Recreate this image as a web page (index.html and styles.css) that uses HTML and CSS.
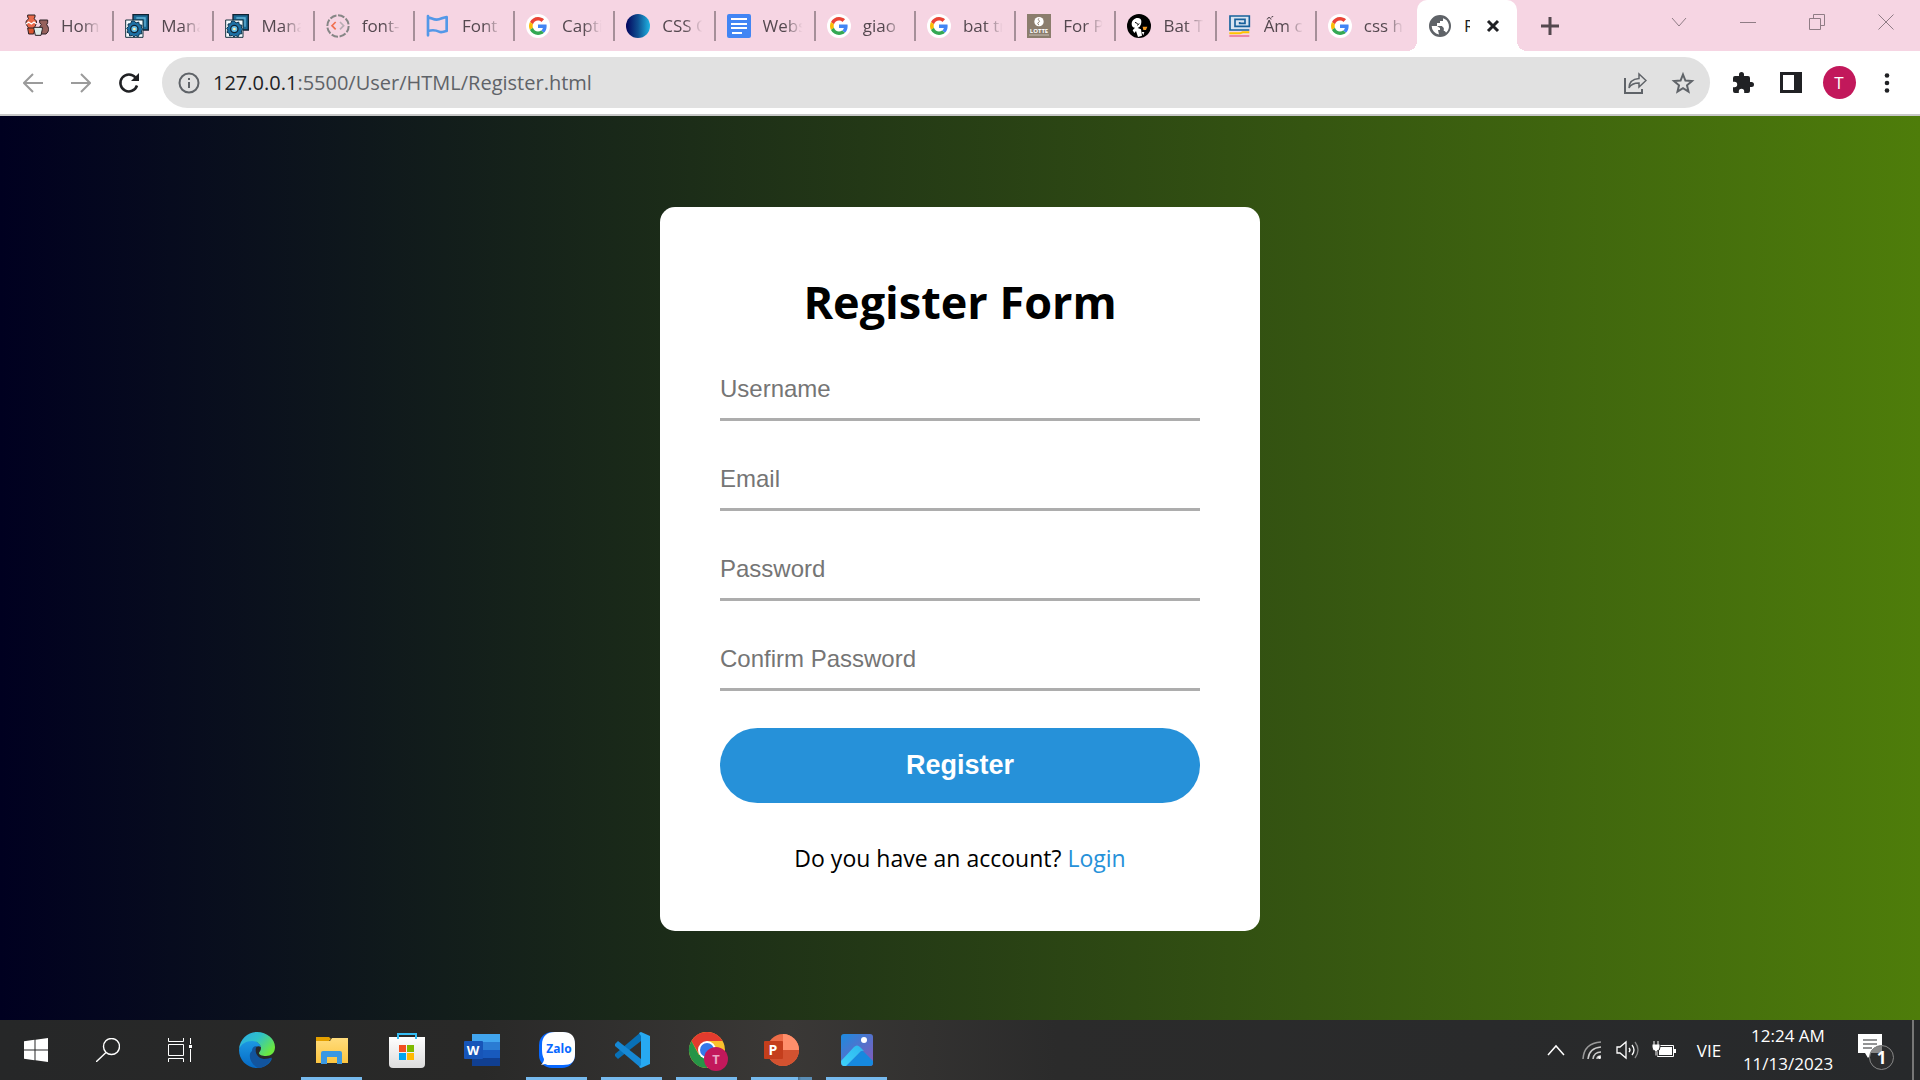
FILE: index.html
```html
<!DOCTYPE html>
<html lang="en">
<head>
<meta charset="utf-8">
<title>Register</title>
<link rel="stylesheet" href="styles.css">
</head>
<body>
<svg class="defs" aria-hidden="true">
  <defs>
    <linearGradient id="g-css"><stop offset="0" stop-color="#03045e"/><stop offset=".5" stop-color="#0f4f90"/><stop offset="1" stop-color="#1fb4e4"/></linearGradient>
    <linearGradient id="g-edge1" x1="0" y1="0" x2="1" y2=".6"><stop offset="0" stop-color="#2aa9ea"/><stop offset=".5" stop-color="#2fc2c9"/><stop offset="1" stop-color="#6be83f"/></linearGradient>
    <linearGradient id="g-edge2" x1="0" y1="0" x2="0" y2="1"><stop offset="0" stop-color="#1d9ae4"/><stop offset="1" stop-color="#0669c4"/></linearGradient>
    <linearGradient id="g-folder" x1="0" y1="0" x2="0" y2="1"><stop offset="0" stop-color="#ffdc7c"/><stop offset="1" stop-color="#fcc540"/></linearGradient>
    <linearGradient id="g-photo" x1="0" y1="0" x2="1" y2="1"><stop offset="0" stop-color="#1b8be0"/><stop offset="1" stop-color="#8a58b8"/></linearGradient>
    <linearGradient id="g-hill" x1="0" y1="1" x2="1" y2="0"><stop offset="0" stop-color="#3ed2fa"/><stop offset="1" stop-color="#2cb6ee"/></linearGradient>
    <linearGradient id="g-store" x1="0" y1="0" x2="0" y2="1"><stop offset="0" stop-color="#fff"/><stop offset="1" stop-color="#dcdcdc"/></linearGradient>
  </defs>
  <symbol id="google" viewBox="0 0 72 72">
    <circle cx="36" cy="36" r="36" fill="#fff"/>
    <g transform="translate(9 9) scale(1.125)">
      <path fill="#ea4335" d="M24 9.500c3.540 0 6.710 1.220 9.210 3.600l6.850-6.850C35.900 2.380 30.470 0 24 0 14.620 0 6.510 5.380 2.560 13.220l7.980 6.190C12.430 13.720 17.740 9.500 24 9.500z"/>
      <path fill="#4285f4" d="M46.980 24.550c0-1.570-.15-3.090-.38-4.550H24v9.020h12.940c-.58 2.960-2.260 5.480-4.780 7.180l7.730 6c4.510-4.180 7.090-10.360 7.090-17.650z"/>
      <path fill="#fbbc05" d="M10.530 28.590c-.48-1.450-.76-2.990-.76-4.590s.27-3.140.76-4.590l-7.980-6.190C.92 16.460 0 20.120 0 24c0 3.880.92 7.540 2.560 10.780z"/>
      <path fill="#34a853" d="M24 48c6.480 0 11.930-2.130 15.890-5.810l-7.730-6c-2.150 1.450-4.920 2.300-8.160 2.300-6.260 0-11.570-4.220-13.470-9.910l-7.980 6.190C6.510 42.620 14.620 48 24 48z"/>
    </g>
  </symbol>
  <symbol id="gear" viewBox="0 0 72 72">
    <path d="M24 2h46v46H24z" fill="#1b6a96" stroke="#123" stroke-width="4"/>
    <path d="M34 12h26v26" fill="none" stroke="#67b5d8" stroke-width="4"/>
    <path d="M2 18h52v52H2z" fill="#f4fbff" stroke="#17323f" stroke-width="3"/>
    <path d="M28 21l5 6 8-3 2 8 8 2-2 8 5 4-5 5 2 8-8 1-3 8-8-3-5 4-5-5-8 2-1-8-7-3 3-7-4-5 5-5-1-8 8-1 3-8z" fill="#1d70a4" stroke="#10354f" stroke-width="3"/>
    <circle cx="28" cy="45" r="11" fill="#65bfe8" stroke="#123" stroke-width="4"/><circle cx="28" cy="45" r="4" fill="#fff2b0"/>
  </symbol>
</svg>

<header class="browser">
  <div class="strip">
    <nav class="tabs" aria-label="Open tabs">
      <a class="tab" href="#"><svg class="fav" viewBox="0 0 72 72"><path d="M8 3h22v6l-3 5c6 4 9 8 7 14-2 8-6 12-8 16h-14C10 40 4 34 3 28c-1-6 3-10 8-14l-3-5z" fill="#e8694a" stroke="#2b2024" stroke-width="3"/><path d="M3 30l8-6 8 6 8-6 8 6" fill="none" stroke="#fff" stroke-width="4"/><path d="M8 42h22l-4 18H11z" fill="#d9552f" stroke="#2b2024" stroke-width="3"/><path d="M44 18h24v8l-3 6c8 10 8 20-2 28H48c-8-8-8-18 1-28l-5-6z" fill="#96615c" stroke="#2b2024" stroke-width="3"/><path d="M26 40h26v6l-4 18H31l-4-18z" fill="#dcebe8" stroke="#2b2024" stroke-width="3"/></svg><span class="title">Home</span></a>
      <a class="tab" href="#"><svg class="fav"><use href="#gear"/></svg><span class="title">Mana</span></a>
      <a class="tab" href="#"><svg class="fav"><use href="#gear"/></svg><span class="title">Mana</span></a>
      <a class="tab" href="#"><svg class="fav" viewBox="0 0 72 72" fill="none"><circle cx="36" cy="36" r="32" stroke="#868686" stroke-width="6" stroke-dasharray="20 5"/><path d="M29 24L18 35l11 11" stroke="#f07050" stroke-width="5"/><path d="M42 24l11 11-11 11" stroke="#b9adb4" stroke-width="5"/></svg><span class="title">font-</span></a>
      <a class="tab" href="#"><svg class="fav" viewBox="0 0 72 72" fill="none" stroke="#5398e8" stroke-width="8" stroke-linejoin="round" stroke-linecap="round"><path d="M6 6v58M6 11c10 0 14 6 26 6s18-7 30-8v42c-10 1-15 6-23 2s-22-5-33-2"/></svg><span class="title">Font</span></a>
      <a class="tab" href="#"><svg class="fav"><use href="#google"/></svg><span class="title">Capti</span></a>
      <a class="tab" href="#"><svg class="fav" viewBox="0 0 24 24"><circle cx="12" cy="12" r="12" fill="url(#g-css)"/></svg><span class="title">CSS C</span></a>
      <a class="tab" href="#"><svg class="fav" viewBox="0 0 24 24"><rect width="24" height="24" rx="2" fill="#4285f4"/><path d="M4 5h16M4 10h16M4 14h16M5 19h10" stroke="#fff" stroke-width="2"/></svg><span class="title">Webs</span></a>
      <a class="tab" href="#"><svg class="fav"><use href="#google"/></svg><span class="title">giao</span></a>
      <a class="tab" href="#"><svg class="fav"><use href="#google"/></svg><span class="title">bat tr</span></a>
      <a class="tab" href="#"><svg class="fav" viewBox="0 0 72 72"><path d="M0 0h72v72H0z" fill="#8b7d6d"/><circle cx="36" cy="23" r="14" fill="#fff"/><path d="M36 13c-7 5 6 8 0 11-5 3-5 6 0 9" stroke="#8b7d6d" stroke-width="3" fill="none"/><text x="36" y="57" text-anchor="middle" class="glyph" font-size="18">LOTTE</text><path d="M6 63h60" stroke="#c9c1b6" stroke-width="3"/></svg><span class="title">For P</span></a>
      <a class="tab" href="#"><svg class="fav" viewBox="0 0 72 72"><circle cx="36" cy="36" r="36" fill="#000"/><path d="M14 30c0-12 12-20 22-17 8 2 8 10 6 18l-4 7-6 4 10 4 3 19-12 4-6-18-5 6-5-8 7-8c-6 0-10-4-10-11z" fill="#fff"/><path d="M24 25l8 4M30 34l7-5" stroke="#000" stroke-width="3"/><path d="M47 38h14l-4 10h-8z" fill="#f39a23"/><path d="M44 54l8 0-3 10z" fill="#fff"/></svg><span class="title">Bat Tr</span></a>
      <a class="tab" href="#"><svg class="fav" viewBox="0 0 72 72" fill="none"><path d="M4 6h60v42H4z" fill="#d8e4f0"/><path d="M64 48H6V6h58v31H21V16h30v12H35v-4" stroke="#17619b" stroke-width="5"/><path d="M4 58h32l8-3h20" stroke="#ffc400" stroke-width="6"/><path d="M4 66h60" stroke="#ee86a8" stroke-width="6"/></svg><span class="title">Ấm c</span></a>
      <a class="tab" href="#"><svg class="fav"><use href="#google"/></svg><span class="title">css h</span></a>
      <div class="tab active"><svg class="fav" viewBox="0 0 24 24"><path fill="#5f6368" d="M12 1a11 11 0 1 0 0 22 11 11 0 0 0 0-22zm-1 19.500A8.500 8.500 0 0 1 3.700 12h5.300l3 2v2h-2zm7-1.800c-.4-1.200-1-1.700-2.200-1.700v-3l-2-2H9V9h3V7h3V4.200a8.500 8.500 0 0 1 3 14.500z"/></svg><span class="title">R</span><button class="close" aria-label="Close tab"><svg viewBox="0 0 14 14" width="14" height="14"><path d="M2 2l10 10M12 2L2 12" stroke="#202124" stroke-width="3"/></svg></button></div>
    </nav>
    <div class="strip-end">
      <button class="newtab" aria-label="New tab"><svg viewBox="0 0 18 18" width="18" height="18"><path d="M9 0v18M0 9h18" stroke="#54484f" stroke-width="3"/></svg></button>
      <div class="window-buttons">
        <button aria-label="Search tabs"><svg viewBox="0 0 16 16"><path d="M1 4l7 8 7-8"/></svg></button>
        <button aria-label="Minimize"><svg viewBox="0 0 16 16"><path d="M0 8.500h16"/></svg></button>
        <button aria-label="Restore"><svg viewBox="0 0 16 16"><path d="M.5 4.500h11v11H.5zM4.500 4V.5h11v11H12"/></svg></button>
        <button aria-label="Close"><svg viewBox="0 0 16 16"><path d="M.5.5l15 15M15.500.5l-15 15"/></svg></button>
      </div>
    </div>
  </div>
  <div class="toolbar">
    <button class="tool" aria-label="Back"><svg viewBox="0 0 20 20" width="20" height="20"><path d="M20 10H2M10 1l-9 9 9 9" fill="none" stroke="#9b9b9b" stroke-width="2"/></svg></button>
    <button class="tool" aria-label="Forward"><svg viewBox="0 0 20 20" width="20" height="20"><path d="M0 10h18M10 1l9 9-9 9" fill="none" stroke="#9b9b9b" stroke-width="2"/></svg></button>
    <button class="tool" aria-label="Reload"><svg viewBox="0 0 22 22" width="22" height="22"><path d="M19 13.500A8.500 8.500 0 1 1 17.500 5.500" fill="none" stroke="#202124" stroke-width="2.500"/><path d="M21 1v8h-8z" fill="#202124"/></svg></button>
    <div class="omnibox">
      <svg viewBox="0 0 22 22" width="22" height="22"><circle cx="11" cy="11" r="9.500" fill="none" stroke="#5f6368" stroke-width="2"/><path d="M11 10v6M11 6v2" stroke="#5f6368" stroke-width="2"/></svg>
      <div class="url"><span class="host">127.0.0.1</span>:5500/User/HTML/Register.html</div>
      <button class="tool" aria-label="Share"><svg viewBox="0 0 24 24" width="24" height="24" fill="none" stroke="#5f6368" stroke-width="2"><path d="M2 7v15h17v-4"/><path d="M6 17c0-7 4-9 10-9.500V3l7 6.500-7 6.500v-4c-5 0-8 1-10 5z" stroke-width="1.500"/></svg></button>
      <button class="tool" aria-label="Bookmark"><svg viewBox="0 0 24 24" width="24" height="24"><path d="M12 3.500l2.400 6 6.600.5-5 4.300 1.500 6.200-5.500-3.400-5.500 3.400L8 14.300 3 10l6.600-.5z" fill="none" stroke="#5f6368" stroke-width="2"/></svg></button>
    </div>
    <button class="tool" aria-label="Extensions"><svg viewBox="0 0 24 24" width="24" height="24"><path fill="#202124" d="M20.500 11H19V7a2 2 0 0 0-2-2h-4V3.500a2.500 2.500 0 0 0-5 0V5H4a2 2 0 0 0-2 2v3.800h1.500a2.700 2.700 0 0 1 0 5.400H2V20a2 2 0 0 0 2 2h3.800v-1.500a2.700 2.700 0 0 1 5.400 0V22H17a2 2 0 0 0 2-2v-4h1.500a2.500 2.500 0 0 0 0-5z"/></svg></button>
    <button class="tool" aria-label="Side panel"><svg viewBox="0 0 22 22" width="22" height="22"><path d="M0 0h22v21H0z" fill="#202124"/><path d="M3 3h11v15H3z" fill="#fff"/></svg></button>
    <button class="tool" aria-label="Profile"><span class="avatar">T</span></button>
    <button class="tool" aria-label="Menu"><svg viewBox="0 0 6 20" width="6" height="20" fill="#202124"><circle cx="3" cy="2.500" r="2.300"/><circle cx="3" cy="10" r="2.300"/><circle cx="3" cy="17.500" r="2.300"/></svg></button>
  </div>
</header>

<main class="page">
  <form class="card">
    <h1>Register Form</h1>
    <div class="fields">
      <input type="text" placeholder="Username" aria-label="Username">
      <input type="email" placeholder="Email" aria-label="Email">
      <input type="password" placeholder="Password" aria-label="Password">
      <input type="password" placeholder="Confirm Password" aria-label="Confirm Password">
    </div>
    <button class="submit" type="button">Register</button>
    <p>Do you have an account? <a href="#">Login</a></p>
  </form>
</main>

<footer class="taskbar">
  <div class="system">
    <button aria-label="Start"><svg viewBox="0 0 24 24" width="24" height="24" fill="#fff"><path d="M0 3.300l10.500-1.500v9.700H0zM11.500 1.700L24 0v11.500H11.500zM0 12.500h10.500v9.700L0 20.700zM11.500 12.500H24V24l-12.500-1.700z"/></svg></button>
    <button aria-label="Search"><svg viewBox="0 0 24 24" width="24" height="24" fill="none" stroke="#fff" stroke-width="1.400"><circle cx="15.500" cy="8.500" r="8"/><path d="M10 14.500L0 24"/></svg></button>
    <button aria-label="Task view"><svg viewBox="0 0 24 24" width="24" height="24" fill="none" stroke="#fff"><path d="M.5 0v3.500h15V0M.5 6.500h15v11H.5zM.5 24v-3.500h15V24M22.500 0v6M22.500 11v13"/><path d="M21 7h3v3h-3z" fill="#fff" stroke="none"/></svg></button>
  </div>
  <div class="apps">
    <button aria-label="Edge"><svg viewBox="0 0 36 36" width="36" height="36"><path d="M0 18C1 9 8 7 13 8c6 1 9 5 9 7-4-2-8 1-8 6 0 6 6 10 12 9 3 0 5-2 7-3-3 6-9 9-15 9C8 36 0 28 0 18z" fill="url(#g-edge2)"/><path d="M13 19c0-3 2-5 5-5-3 4-1 12 7 13 4 0 7-2 8-1-3 6-8 10-14 10-6-3-9-9-8-14 0-1 1-2 2-3z" fill="#12549d"/><path d="M0 17C1 7 9 0 18 0c10 0 18 7 18 15 0 6-4 9-9 9-4 0-7-1-7-3 0-1 2-2 2-5 0-4-4-7-9-7C7 9 2 12 0 17z" fill="url(#g-edge1)"/></svg></button>
    <button class="open" aria-label="File Explorer"><svg viewBox="0 0 32 36" width="32" height="36"><path d="M0 9h14l2-3h16v25H0z" fill="url(#g-folder)"/><path d="M0 5h13l2 2-2 2H0z" fill="#e4a000"/><path d="M5 32V21q0-2 2-2h17q2 0 2 2v11h-5v-7H11v7z" fill="#3a98e2"/></svg></button>
    <button aria-label="Store"><svg viewBox="0 0 36 36" width="36" height="36"><path d="M0 5h36v27q0 4-4 4H4q-4 0-4-4z" fill="url(#g-store)"/><path d="M9 7V2h18v5" fill="none" stroke="#35bdf4" stroke-width="2"/><path d="M10 13h7v7h-7z" fill="#f25022"/><path d="M18 13h7v7h-7z" fill="#7fba00"/><path d="M10 21h7v7h-7z" fill="#00a4ef"/><path d="M18 21h7v7h-7z" fill="#ffb900"/></svg></button>
    <button aria-label="Word"><svg viewBox="0 0 36 36" width="36" height="36"><path d="M8 2h28v8H8z" fill="#41a5ee"/><path d="M8 10h28v8H8z" fill="#2b7cd3"/><path d="M8 18h28v8H8z" fill="#185abd"/><path d="M8 26h28v8H8z" fill="#103f91"/><rect y="9" width="19" height="18" rx="1" fill="#1755b8"/><text x="9" y="23" text-anchor="middle" class="glyph" font-size="13">W</text></svg></button>
    <button class="open" aria-label="Zalo"><svg viewBox="0 0 36 36" width="36" height="36"><rect width="36" height="36" rx="13" fill="#0868ff"/><path d="M16 0h8c8 0 12 4 12 12v10c0 8-4 11-12 11H12c-3 0-4 0-6-1l-4 1c2-2 3-4 3-6-2-4-2-7-2-14C3 4 8 0 16 0z" fill="#fff"/><text x="20" y="21" text-anchor="middle" class="glyph zalo" font-size="12">Zalo</text></svg></button>
    <button class="open" aria-label="Visual Studio Code"><svg viewBox="0 0 36 36" width="36" height="36"><path d="M1 24l3 3L27 9V0L1 22z" fill="#0870b6"/><path d="M1 12l3-3 23 18v9L1 14z" fill="#1688d4"/><path d="M25 1l2-1 9 4v28l-9 4-2-1 2-2V4z" fill="#27a9f1"/></svg></button>
    <button class="open" aria-label="Chrome"><svg viewBox="0 0 36 40" width="36" height="40" overflow="visible"><circle cx="18" cy="20" r="18" fill="#fbc02d"/><path d="M2.400 11A18 18 0 0 1 33.600 11H18L10 24z" fill="#e33b2e"/><path d="M2.400 11A18 18 0 0 0 18 38l8-13-16 0z" fill="#269447"/><circle cx="18" cy="20" r="9" fill="#fff"/><circle cx="18" cy="20" r="7" fill="#3478ea"/><circle cx="27" cy="29" r="12" fill="#c2185b"/><text x="27" y="34" text-anchor="middle" class="glyph profile" font-size="13">T</text></svg></button>
    <button class="open grouped" aria-label="PowerPoint"><svg viewBox="0 0 36 36" width="36" height="36"><circle cx="19" cy="18" r="16" fill="#ed6c47"/><path d="M19 2a16 16 0 0 1 16 16H19z" fill="#ff8f6b"/><path d="M3 18h32a16 16 0 0 1-32 0z" fill="#d35230"/><rect y="9" width="19" height="18" rx="1" fill="#c43e1c"/><text x="9" y="23" text-anchor="middle" class="glyph" font-size="14">P</text></svg></button>
    <button class="open" aria-label="Photos"><svg viewBox="0 0 32 32" width="32" height="32"><rect width="32" height="32" rx="3" fill="url(#g-photo)"/><circle cx="23" cy="6" r="3" fill="#fff"/><path d="M5 32L19 18q2-2 4 0l9 9v2q0 3-3 3z" fill="#1689df"/><path d="M0 27l13-14q3-3 6 0l4 4q-3-1-5 2L5 32q-5 1-5-5z" fill="url(#g-hill)"/></svg></button>
  </div>
  <div class="tray">
    <button class="narrow" aria-label="Show hidden icons"><svg viewBox="0 0 18 12" width="18" height="12" fill="none" stroke="#fff" stroke-width="1.500"><path d="M1 11l8-9 8 9"/></svg></button>
    <button class="narrow" aria-label="Network"><svg viewBox="0 0 20 20" width="20" height="20" fill="none" stroke="#ccc" stroke-width="1.500"><path d="M1 19Q2 3 19 2" stroke="#999"/><path d="M6 19Q7 8 19 7M11 19q1-7 8-7M15 19q0-3 4-3"/><circle cx="17.500" cy="17.500" r="1.500" fill="#fff" stroke="none"/></svg></button>
    <button class="narrow" aria-label="Volume"><svg viewBox="0 0 24 20" width="24" height="20" fill="none" stroke="#fff" stroke-width="1.300"><path d="M1 7h3l6-5v16l-6-5H1zM13 8q2 2 0 4M16 5q4 5 0 10"/><path d="M19 2q6 8 0 16" stroke="#888"/></svg></button>
    <button class="narrow" aria-label="Battery"><svg viewBox="0 0 24 18" width="24" height="18"><path d="M5.500 4.500h16v11h-16z" fill="none" stroke="#fff"/><path d="M7 6h13v8H7z" fill="#fff"/><path d="M23 8v4" stroke="#fff" stroke-width="2"/><path d="M0 3h8v3q0 4-3 4v5H3v-5Q0 10 0 6z" fill="#fff" stroke="#29292a"/><path d="M2 0v4M6 0v4" stroke="#fff"/></svg></button>
    <button class="lang">VIE</button>
    <button class="clock"><span>12:24 AM</span><span>11/13/2023</span></button>
    <button class="notes" aria-label="Notifications"><svg viewBox="0 0 36 36" width="36" height="36"><path d="M0 0h24v19H14l-4 5-3-5H0z" fill="#fff"/><path d="M5 6h14M5 10h14M5 14h9" stroke="#27292b"/><circle cx="23.500" cy="23.500" r="12" fill="#2c2d2e" stroke="#888"/><path d="M12 19a12 12 0 0 1 12-7v7z" fill="#888"/><text x="23.500" y="30" text-anchor="middle" class="glyph" font-size="17">1</text></svg></button>
  </div>
</footer>
</body>
</html>
```
FILE: styles.css
```css
* { box-sizing: border-box; }

body {
  margin: 0;
  min-height: 100vh;
  display: flex;
  flex-direction: column;
  font-family: "Open Sans", "Noto Sans", sans-serif;
}

button {
  display: flex;
  align-items: center;
  justify-content: center;
  padding: 0;
  border: 0;
  background: none;
  font: inherit;
  color: inherit;
}

a { text-decoration: none; }
svg { flex: none; }
.defs { position: absolute; width: 0; height: 0; }
.glyph { font-family: "Open Sans", sans-serif; font-weight: 700; fill: #fff; }
.zalo { fill: #0868ff; }
.profile { fill: #eaa5c3; }

/* Tab strip */
.strip { display: flex; height: 51px; background: #f6d5e3; }
.tabs { flex: 1; min-width: 0; display: flex; padding-left: 14px; }
.tab {
  flex: 1;
  min-width: 0;
  position: relative;
  display: flex;
  align-items: center;
  gap: 12px;
  padding: 0 10px 0 11px;
  color: #54484f;
  font-size: 17px;
}
.tab:not(.active)::after {
  content: "";
  position: absolute;
  right: 0;
  top: 11px;
  width: 2px;
  height: 30px;
  background: #a68f99;
}
.tab:nth-last-child(2)::after { display: none; }
.fav { width: 24px; height: 24px; }
.title {
  flex: 1;
  min-width: 0;
  overflow: hidden;
  white-space: nowrap;
  mask-image: linear-gradient(to right, #000 50%, transparent 92%);
}
.tab.active { flex: 0 0 100px; background: #fff; border-radius: 10px 10px 0 0; color: #202124; }
.active .title { flex: 0 0 6px; mask-image: none; }
.active::before,
.active::after {
  content: "";
  position: absolute;
  bottom: 0;
  width: 10px;
  height: 10px;
}
.active::before { left: -10px; background: radial-gradient(circle at 0 0, transparent 10px, #fff 10px); }
.active::after { right: -10px; background: radial-gradient(circle at 100% 0, transparent 10px, #fff 10px); }
.close { margin-left: auto; margin-right: 7px; }
.strip-end { width: 403px; display: flex; justify-content: space-between; }
.newtab { width: 65px; }
.window-buttons { display: flex; height: 43px; }
.window-buttons button { width: 69px; }
.window-buttons svg { width: 16px; height: 16px; fill: none; stroke: #8f7c85; }

/* Toolbar */
.toolbar {
  display: flex;
  align-items: center;
  padding: 6px 9px;
  background: #fff;
  border-bottom: 2px solid #c8c8c8;
}
.tool { width: 48px; height: 48px; }
.omnibox {
  flex: 1;
  min-width: 0;
  height: 51px;
  margin: 0 9px;
  padding: 0 3px 0 16px;
  display: flex;
  align-items: center;
  border-radius: 26px;
  background: #e1e1e1;
}
.url { flex: 1; padding-left: 13px; font-size: 20px; color: #5f6368; }
.host { color: #202124; }
.avatar {
  width: 33px;
  height: 33px;
  border-radius: 50%;
  background: #c2185b;
  color: #fff;
  font-size: 17px;
  line-height: 33px;
}

/* Registration page */
.page {
  flex: 1;
  display: flex;
  align-items: center;
  justify-content: center;
  padding-top: 2px;
  background: linear-gradient(to right, #000020, #4e7d0a);
}
.card {
  width: 600px;
  padding: 60px;
  border-radius: 15px;
  background: #fff;
}
.card h1 {
  margin: 0 0 24px;
  font-size: 45px;
  line-height: 69px;
  text-align: center;
  color: #000;
}
.fields { display: grid; gap: 29px; }
.fields input {
  width: 100%;
  height: 61px;
  padding: 0;
  border: 0;
  border-bottom: 3px solid #adadad;
  outline: none;
  font: 24px "Liberation Sans", sans-serif;
}
.fields input::placeholder { color: #757575; }
.submit {
  width: 100%;
  height: 75px;
  margin: 37px 0 42px;
  border-radius: 38px;
  background: #2691d9;
  color: #fff;
  font: bold 27px "Liberation Sans", sans-serif;
}
.card p { margin: 0; font-size: 23px; line-height: 26px; text-align: center; }
.card p a { color: #2691d9; }

/* Taskbar */
.taskbar {
  display: flex;
  height: 60px;
  background: linear-gradient(to right, #262728, #292928 25%, #3a3836 41%, #2b2b2b 55%, #27292b);
  color: #fff;
}
.system, .apps, .tray { display: flex; }
.system button { width: 72px; }
.apps { padding-left: 3px; }
.apps button { width: 75px; position: relative; }
.open::after {
  content: "";
  position: absolute;
  left: 7px;
  right: 7px;
  bottom: 0;
  height: 3px;
  background: #76b9ed;
}
.grouped::after { background: linear-gradient(to right, #76b9ed 47px, #456b89 47px, #5a8db5 50px); }
.tray { margin-left: auto; margin-right: 6px; border-right: 2px solid #777; font-size: 17px; }
.narrow { width: 36px; }
.lang { width: 54px; }
.clock { width: 104px; flex-direction: column; line-height: 28px; }
.notes { width: 72px; padding-top: 3px; }
```
